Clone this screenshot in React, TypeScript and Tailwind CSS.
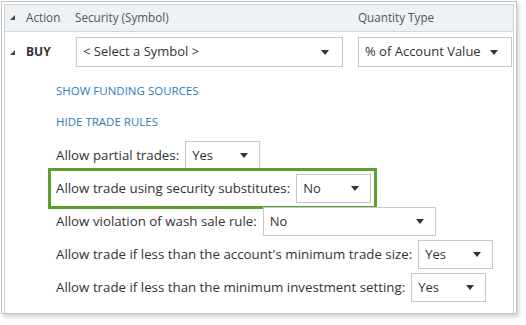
import React from 'react';

const font = { fontFamily: '"Open Sans", "Noto Sans", sans-serif' };

function Arrow() {
  return (
    <svg width="8" height="5" viewBox="0 0 8 5" className="shrink-0">
      <path d="M0 0h8L4 5z" fill="#333" />
    </svg>
  );
}

function Expander() {
  return (
    <svg width="5" height="5" viewBox="0 0 5 5" className="shrink-0">
      <path d="M5 0V5H0z" fill="#444" />
    </svg>
  );
}

interface SelectProps {
  value: string;
  width: string;
  tall?: boolean;
}

const Select = ({ value, width, tall }: SelectProps) => (
  <div
    className={`${width} ${tall ? 'h-[30px] pr-[13px]' : 'h-[29px] pr-[11px]'} flex items-center justify-between border border-[#c8c8c8] bg-white pl-[6px] text-[13px] text-[#333]`}
  >
    <span>{value}</span>
    <Arrow />
  </div>
);

const rules = [
  { label: 'Allow partial trades:', value: 'Yes', width: 'w-[75px]' },
  { label: 'Allow trade using security substitutes:', value: 'No', width: 'w-[75px]', highlight: true },
  { label: 'Allow violation of wash sale rule:', value: 'No', width: 'w-[173px]' },
  { label: "Allow trade if less than the account's minimum trade size:", value: 'Yes', width: 'w-[75px]' },
  { label: 'Allow trade if less than the minimum investment setting:', value: 'Yes', width: 'w-[75px]' },
];

export default function App() {
  return (
    <div className="w-[526px] h-[325px] bg-white p-[1px]" style={font}>
      <div className="w-[516px] h-[313px] border border-[#c6c6c6] px-[2px] pt-[2px] shadow-[2px_3px_4px_rgba(0,0,0,0.18)]">
        <div className="h-full border-x border-t border-[#d2d2d2]">
          {/* header */}
          <div className="grid h-[27px] grid-cols-[70px_283px_1fr] items-center border-b border-[#cfd5da] bg-[#eef2f5] text-[11.7px] text-[#555]">
            <div className="flex items-center gap-[11px] pl-[5px]">
              <Expander />
              <span>Action</span>
            </div>
            <span>Security (Symbol)</span>
            <span>Quantity Type</span>
          </div>

          {/* buy row */}
          <div className="mt-[5px] grid grid-cols-[71px_282px_1fr] items-center">
            <div className="flex items-center gap-[11px] pl-[5px]">
              <Expander />
              <span className="text-[12px] font-bold text-[#333]">BUY</span>
            </div>
            <Select value="< Select a Symbol >" width="w-[267px]" tall />
            <Select value="% of Account Value" width="w-[154px]" tall />
          </div>

          {/* links */}
          <div className="mt-[8px] pl-[51px] text-[11.5px] text-[#2e7cb5]">
            <div className="flex h-[31px] items-center">SHOW FUNDING SOURCES</div>
            <div className="flex h-[31px] items-center">HIDE TRADE RULES</div>
          </div>

          {/* trade rules */}
          <div className="mt-[4px] flex flex-col gap-[4px] pl-[51px]">
            {rules.map((r) => (
              <div key={r.label} className="flex">
                <div className="relative flex items-center gap-[6px] text-[13.3px] text-[#333]">
                  <span>{r.label}</span>
                  <Select value={r.value} width={r.width} />
                  {r.highlight && (
                    <div className="pointer-events-none absolute -left-[8px] -right-[6px] -top-[6px] -bottom-[6px] border-[3px] border-[#5f9e2a]" />
                  )}
                </div>
              </div>
            ))}
          </div>
        </div>
      </div>
    </div>
  );
}
